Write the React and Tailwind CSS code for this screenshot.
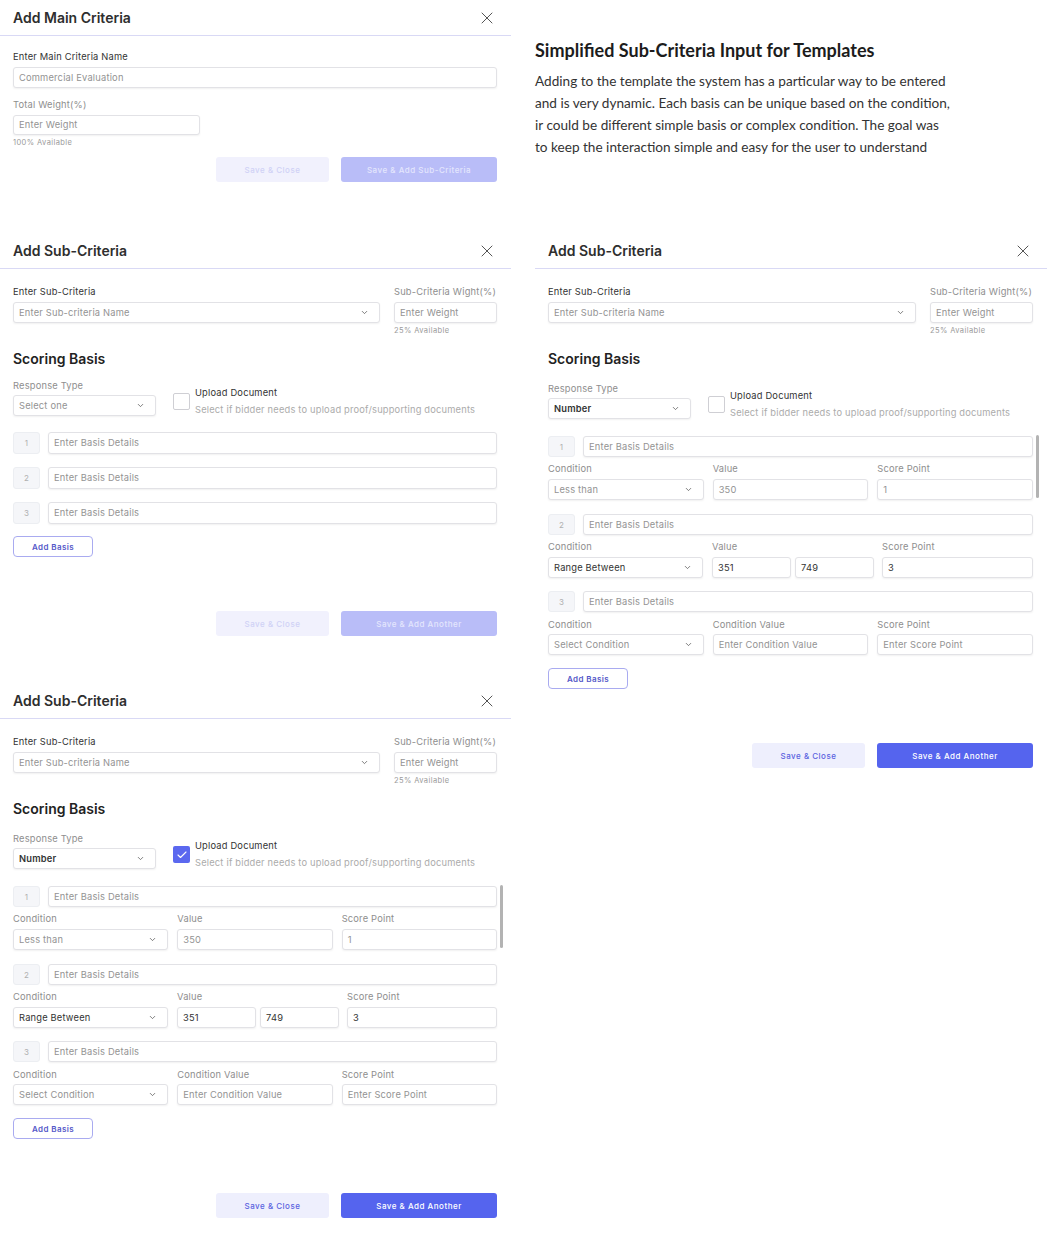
import React from 'react';
import { X, ChevronDown, Check } from 'lucide-react';

const Box = ({ className = '', dark, children }) => (
  <div
    className={`flex items-center rounded-[3px] border border-[#e2e2e6] bg-white px-[5px] text-[9.3px] tracking-[0.2px] shadow-[0_1px_2px_rgba(0,0,0,0.06)] ${
      dark ? 'text-[#333]' : 'text-[#939393]'
    } ${className}`}
  >
    {children}
  </div>
);

const Select = ({ className = '', dark, bold, children }) => (
  <Box dark={dark} className={`justify-between pr-[10px] ${bold ? 'font-semibold text-[8px]' : ''} ${className}`}>
    <span>{children}</span>
    <ChevronDown size={9} strokeWidth={2} className="text-[#555]" />
  </Box>
);

const Label = ({ className = '', dark, children }) => (
  <div className={`text-[9.3px] leading-[12px] tracking-[0.2px] ${dark ? 'text-[#333]' : 'text-[#8e8e8e]'} ${className}`}>
    {children}
  </div>
);

const Tiny = ({ className = '', children }) => (
  <div className={`text-[7.5px] leading-[10px] tracking-[0.4px] text-[#9a9a9a] ${className}`}>{children}</div>
);

const Header = ({ title }) => (
  <div className="flex h-[36px] items-center justify-between border-b border-[#d9d9f5] pl-[13px] pr-[14px]">
    <h2 className="text-[14px] font-semibold text-[#2e2e2e]">{title}</h2>
    <X size={20} strokeWidth={1.2} className="text-[#555]" />
  </div>
);

const Buttons = ({ primary, active, className = '' }) => (
  <div className={`flex justify-end gap-[12px] ${className}`}>
    <div
      className={`flex h-[25px] w-[113px] items-center justify-center rounded-[3px] text-[8px] font-medium tracking-[0.5px] ${
        active ? 'bg-[#eeeffd] text-[#5a63e0]' : 'bg-[#f1f1fd] text-[#d0d2f6]'
      }`}
    >
      Save &amp; Close
    </div>
    <div
      className={`flex h-[25px] w-[156px] items-center justify-center rounded-[3px] text-[8px] font-medium tracking-[0.5px] ${
        active ? 'bg-[#5564ee] text-white' : 'bg-[#b9bdf8] text-[#e4e6fd]'
      }`}
    >
      {primary}
    </div>
  </div>
);

const AddBasis = ({ className = '' }) => (
  <div
    className={`flex h-[21px] w-[80px] items-center justify-center rounded-[4px] border border-[#a9abf0] text-[8px] font-semibold tracking-[0.4px] text-[#5457c8] ${className}`}
  >
    Add Basis
  </div>
);

const BasisRow = ({ n, className = '' }) => (
  <div className={`flex gap-[8px] ${className}`}>
    <div className="flex w-[27px] items-center justify-center rounded-[3px] border border-[#eceef2] bg-[#f5f6f9] text-[8px] text-[#b0b0b0]">
      {n}
    </div>
    <Box className="flex-1">Enter Basis Details</Box>
  </div>
);

const SubTop = () => (
  <div className="flex gap-[14px]">
    <div className="flex-1">
      <Label dark className="mt-[17px]">Enter Sub-Criteria</Label>
      <Select className="mt-[4px] h-[21px]">Enter Sub-criteria Name</Select>
    </div>
    <div className="w-[103px]">
      <Label className="mt-[17px]">Sub-Criteria Wight(%)</Label>
      <Box className="mt-[4px] h-[21px]">Enter Weight</Box>
      <Tiny className="mt-[3px]">25% Available</Tiny>
    </div>
  </div>
);

const Response = ({ value, dark, checked, detailed }) => (
  <div className="flex items-start">
    <div className="w-[143px]">
      <Label className={detailed ? 'mt-[15px]' : 'mt-[12px]'}>Response Type</Label>
      <Select dark={dark} bold={dark} className="mt-[3px] h-[21px]">
        {value}
      </Select>
    </div>
    <div className={`ml-[17px] flex ${detailed ? 'mt-[22px]' : 'mt-[19px]'}`}>
      {checked ? (
        <div className="mt-[6px] flex h-[17px] w-[17px] items-center justify-center rounded-[2px] bg-[#5b68ef]">
          <Check size={12} strokeWidth={2.2} className="text-white" />
        </div>
      ) : (
        <div className="mt-[6px] h-[17px] w-[17px] rounded-[2px] border border-[#cfcfd4] bg-white" />
      )}
      <div className="ml-[5px]">
        <Label dark>Upload Document</Label>
        <Label className="mt-[5px] text-[#ababab]">Select if bidder needs to upload proof/supporting documents</Label>
      </div>
    </div>
  </div>
);

const Cond = ({ label, children, className = '' }) => (
  <div className={className}>
    <Label>{label}</Label>
    {children}
  </div>
);

const DetailedBasis = () => (
  <div className="relative mt-[17px]">
    <div className="absolute right-[-6px] top-[-1px] h-[63px] w-[3px] rounded-full bg-[#b3b3b3]" />
    <BasisRow n="1" className="h-[21px]" />
    <div className="mt-[6px] grid grid-cols-3 gap-x-[9px]">
      <Cond label="Condition">
        <Select className="mt-[4px] h-[21px]">Less than</Select>
      </Cond>
      <Cond label="Value">
        <Box className="mt-[4px] h-[21px]">350</Box>
      </Cond>
      <Cond label="Score Point">
        <Box className="mt-[4px] h-[21px]">1</Box>
      </Cond>
    </div>
    <BasisRow n="2" className="mt-[14px] h-[21px]" />
    <div className="mt-[6px] flex">
      <Cond label="Condition" className="w-[155px]">
        <Select dark className="mt-[4px] h-[21px]">Range Between</Select>
      </Cond>
      <Cond label="Value" className="ml-[9px]">
        <div className="mt-[4px] flex gap-[4px]">
          <Box dark className="h-[21px] w-[79px]">351</Box>
          <Box dark className="h-[21px] w-[79px]">749</Box>
        </div>
      </Cond>
      <Cond label="Score Point" className="ml-[8px] flex-1">
        <Box dark className="mt-[4px] h-[21px]">3</Box>
      </Cond>
    </div>
    <BasisRow n="3" className="mt-[13px] h-[21px]" />
    <div className="mt-[7px] grid grid-cols-3 gap-x-[9px]">
      <Cond label="Condition">
        <Select className="mt-[3px] h-[21px]">Select Condition</Select>
      </Cond>
      <Cond label="Condition Value">
        <Box className="mt-[3px] h-[21px]">Enter Condition Value</Box>
      </Cond>
      <Cond label="Score Point">
        <Box className="mt-[3px] h-[21px]">Enter Score Point</Box>
      </Cond>
    </div>
  </div>
);

const DetailedPanel = ({ checked }) => (
  <section className="h-[550px]">
    <Header title="Add Sub-Criteria" />
    <div className="pl-[13px] pr-[14px]">
      <SubTop />
      <h3 className="mt-[14px] text-[14px] font-semibold leading-[18px] text-[#222]">Scoring Basis</h3>
      <Response value="Number" dark checked={checked} detailed />
      <DetailedBasis />
      <AddBasis className="mt-[13px]" />
      <Buttons active primary="Save & Add Another" className="mt-[54px]" />
    </div>
  </section>
);

export default function App() {
  return (
    <div className="flex h-[1233px] w-[1047px] gap-[24px] overflow-hidden bg-white font-['Inter',sans-serif]">
      <div className="w-[511px] shrink-0">
        <section className="h-[233px]">
          <Header title="Add Main Criteria" />
          <div className="pl-[13px] pr-[14px]">
            <Label dark className="mt-[15px]">Enter Main Criteria Name</Label>
            <Box className="mt-[4px] h-[21px]">Commercial Evaluation</Box>
            <Label className="mt-[11px]">Total Weight(%)</Label>
            <Box className="mt-[4px] h-[20px] w-[187px]">Enter Weight</Box>
            <Tiny className="mt-[3px]">100% Available</Tiny>
            <Buttons primary="Save & Add Sub-Criteria" className="mt-[9px]" />
          </div>
        </section>

        <section className="h-[450px]">
          <Header title="Add Sub-Criteria" />
          <div className="pl-[13px] pr-[14px]">
            <SubTop />
            <h3 className="mt-[14px] text-[14px] font-semibold leading-[18px] text-[#222]">Scoring Basis</h3>
            <Response value="Select one" />
            <BasisRow n="1" className="mt-[16px] h-[22px]" />
            <BasisRow n="2" className="mt-[13px] h-[22px]" />
            <BasisRow n="3" className="mt-[13px] h-[22px]" />
            <AddBasis className="mt-[12px]" />
            <Buttons primary="Save & Add Another" className="mt-[54px]" />
          </div>
        </section>

        <DetailedPanel checked />
      </div>

      <div className="w-[512px] shrink-0">
        <div className="h-[233px] pt-[39px] font-['Lato',sans-serif]">
          <h1 className="whitespace-nowrap text-[18px] font-bold leading-[22px] text-[#1c1c1c]">
            Simplified Sub-Criteria Input for Templates
          </h1>
          <div className="mt-[9px] text-[13.6px] leading-[22px] text-[#333]">
            <p className="whitespace-nowrap">Adding to the template the system has a particular way to be entered</p>
            <p className="whitespace-nowrap">and is very dynamic. Each basis can be unique based on the condition,</p>
            <p className="whitespace-nowrap">ir could be different simple basis or complex condition. The goal was</p>
            <p className="whitespace-nowrap">to keep the interaction simple and easy for the user to understand</p>
          </div>
        </div>
        <DetailedPanel />
      </div>
    </div>
  );
}
